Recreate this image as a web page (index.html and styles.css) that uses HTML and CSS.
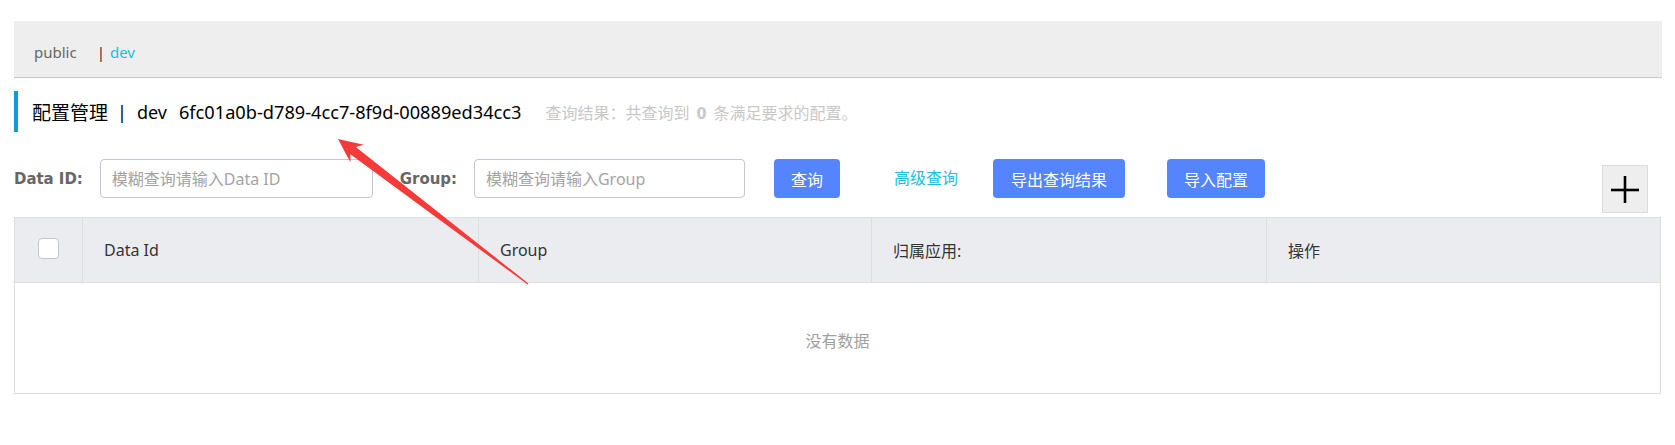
FILE: index.html
```html
<!DOCTYPE html>
<html lang="zh-CN">
<head>
<meta charset="utf-8">
<title>配置管理</title>
<link rel="stylesheet" href="styles.css">
</head>
<body>
<div class="page">
  <div class="ns-bar">
    <span class="ns">public</span><span class="ns-sep">|</span><span class="ns ns-active">dev</span>
  </div>

  <div class="title">
    <span class="title-main">配置管理</span><span class="title-sep">|</span><span class="title-ns">dev</span><span class="title-id">6fc01a0b-d789-4cc7-8f9d-00889ed34cc3</span>
    <span class="result">查询结果：共查询到<strong class="count">0</strong>条满足要求的配置。</span>
  </div>

  <div class="toolbar">
    <div class="form-item">
      <label class="form-label">Data ID:</label>
      <input class="form-input" type="text" placeholder="模糊查询请输入Data ID">
    </div>
    <div class="form-item">
      <label class="form-label">Group:</label>
      <input class="form-input form-input-group" type="text" placeholder="模糊查询请输入Group">
    </div>
    <button class="btn btn-primary btn-search">查询</button>
    <a class="link-advanced">高级查询</a>
    <button class="btn btn-primary btn-export">导出查询结果</button>
    <button class="btn btn-primary">导入配置</button>
    <button class="btn-add" aria-label="add">
      <svg width="46" height="48" viewBox="0 0 46 48">
        <line x1="9" y1="25" x2="37" y2="25" stroke="#000" stroke-width="2.6"/>
        <line x1="23" y1="11" x2="23" y2="38" stroke="#000" stroke-width="2.6"/>
      </svg>
    </button>
  </div>

  <div class="table">
    <div class="thead">
      <div class="th th-check"><span class="checkbox"></span></div>
      <div class="th">Data Id</div>
      <div class="th">Group</div>
      <div class="th">归属应用:</div>
      <div class="th th-last">操作</div>
    </div>
    <div class="tbody-empty">没有数据</div>
  </div>

  <svg class="annotation" width="1675" height="445" viewBox="0 0 1675 445">
    <polygon points="338,139 363.8,144.8 355.8,147 528.4,283.5 527.6,284.5 350.4,154.2 350.4,162.2" fill="#f53a3a"/>
  </svg>
</div>
</body>
</html>
```

FILE: styles.css
```css
html, body {
  margin: 0;
  padding: 0;
  background: #fff;
}

body {
  font-family: "Noto Sans", "Noto Sans CJK SC", sans-serif;
  color: #333;
}

.page {
  position: relative;
  padding: 21px 13px 0 14px;
  width: 1675px;
  height: 445px;
  box-sizing: border-box;
}

/* namespace bar */
.ns-bar {
  background: #eeeeee;
  border-bottom: 1px solid #c9c9c9;
  height: 57px;
  box-sizing: border-box;
  padding: 6px 0 0 20px;
  font-size: 15px;
  line-height: 20px;
  display: flex;
  align-items: center;
}

.ns {
  color: #666;
}

.ns-sep {
  color: #333;
  margin: 0 5px 0 20px;
}

.ns-active {
  color: #17bfdf;
}

/* title */
.title {
  margin-top: 13px;
  height: 41px;
  border-left: 4px solid #109bd6;
  padding-left: 14px;
  display: flex;
  align-items: center;
  font-size: 18px;
  color: #000;
  white-space: nowrap;
}

.title-main {
  font-size: 19px;
}

.title-sep {
  margin: 0 10px 0 9px;
}

.title-id {
  margin-left: 12px;
  font-size: 18.2px;
}

.result {
  margin-left: 24px;
  font-size: 16px;
  color: #c8c8c8;
}

.count {
  font-family: "DejaVu Sans Condensed", "DejaVu Sans", sans-serif;
  font-stretch: condensed;
  font-weight: bold;
  margin: 0 7px;
}

/* toolbar */
.toolbar {
  margin-top: 27px;
  height: 58px;
  display: flex;
  align-items: flex-start;
}

.form-item {
  display: flex;
  align-items: center;
  margin-right: 27px;
  height: 39px;
}

.form-label {
  font-family: "DejaVu Sans Condensed", "DejaVu Sans", sans-serif;
  font-stretch: condensed;
  font-weight: bold;
  font-size: 16.6px;
  color: #666;
  margin-right: 17px;
  white-space: nowrap;
}

.form-input {
  width: 273px;
  height: 39px;
  box-sizing: border-box;
  border: 1px solid #c4c6cf;
  border-radius: 4px;
  padding: 0 11px;
  font-family: "Noto Sans", "Noto Sans CJK SC", sans-serif;
  font-size: 16px;
  color: #333;
  outline: none;
}

.form-input::placeholder {
  color: #a3a3a3;
}

.form-input-group {
  width: 271px;
}

.btn {
  height: 39px;
  box-sizing: border-box;
  border: none;
  border-radius: 4px;
  padding: 0 17px;
  font-family: "Noto Sans", "Noto Sans CJK SC", sans-serif;
  font-size: 16px;
  cursor: pointer;
  margin-right: 44px;
}

.btn-primary {
  background: #5584ff;
  color: #fff;
}

.btn-search {
  margin-left: 2px;
  margin-right: 54px;
}

.link-advanced {
  color: #1fc0e0;
  font-size: 16px;
  line-height: 39px;
  margin-right: 35px;
  cursor: pointer;
}

.btn-export {
  padding: 0 18px;
  margin-right: 42px;
}

.btn-add {
  margin-left: auto;
  margin-right: 14px;
  margin-top: 6px;
  width: 46px;
  height: 48px;
  box-sizing: border-box;
  padding: 0;
  border: 1px solid #dcdcdc;
  background: #eeeeee;
  display: block;
}

.btn-add svg {
  display: block;
  margin: -1px;
}

/* table */
.table {
  border: 1px solid #dcdee3;
  margin-right: 1px;
}

.thead {
  display: grid;
  grid-template-columns: 68px 396px 393px 395px 1fr;
  background: #ebecf0;
  height: 65px;
  box-sizing: border-box;
  border-bottom: 1px solid #dcdee3;
}

.th {
  border-right: 1px solid #dcdee3;
  display: flex;
  align-items: center;
  padding-left: 21px;
  font-size: 16px;
  color: #333;
}

.th-check {
  padding-left: 0;
  justify-content: center;
}

.th-last {
  border-right: none;
}

.checkbox {
  width: 21px;
  height: 21px;
  box-sizing: border-box;
  border: 1px solid #c4c6cf;
  border-radius: 4px;
  background: #fff;
  margin-top: -3px;
}

.tbody-empty {
  height: 110px;
  display: flex;
  align-items: center;
  justify-content: center;
  font-size: 16px;
  color: #a0a0a0;
  padding-top: 4px;
  box-sizing: border-box;
}

.annotation {
  position: absolute;
  top: 0;
  left: 0;
  pointer-events: none;
}
```
